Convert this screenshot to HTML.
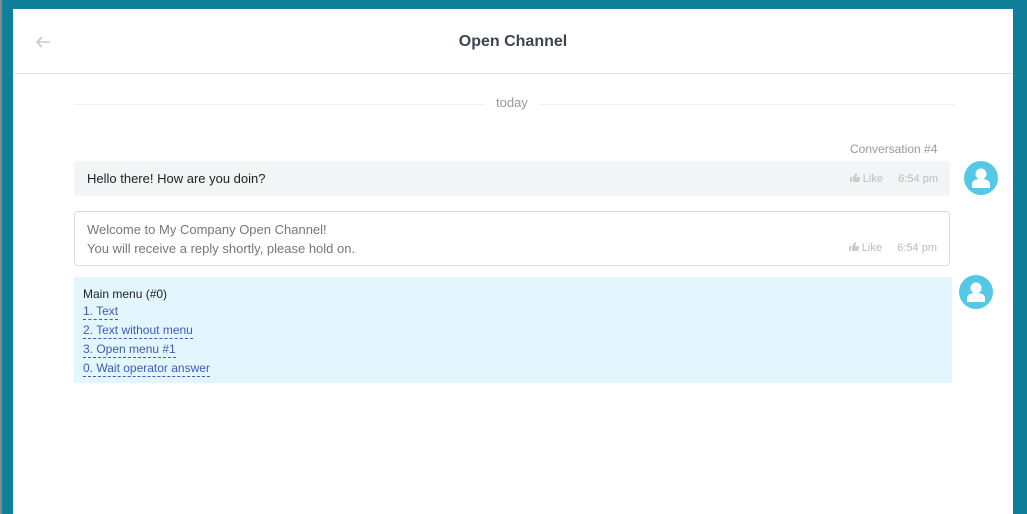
<!DOCTYPE html><html><head><style>
body{margin:0;width:1027px;height:514px;background:#10809a;font-family:"Liberation Sans",sans-serif;position:relative;overflow:hidden}
.l{position:absolute;left:0;top:0;width:2px;height:514px;background:#888}
.w{position:absolute;left:13px;top:9px;width:1000px;height:505px;background:#fff}
.a{position:absolute}
.hdr{left:0;top:0;width:1000px;height:64px;border-bottom:1px solid #e2e3e5}
.t{position:absolute;top:24px;left:0;width:1000px;text-align:center;font-weight:bold;font-size:16px;color:#3d4451}
.b1{left:61px;top:152px;width:876px;height:35px;background:#f3f4f6;border-radius:3px}
.b2{left:61px;top:202px;width:874px;height:53px;border:1px solid #dcdcdc;border-radius:4px}
.m{left:61px;top:268px;width:878px;height:106px;background:#e3f6fd}
.meta{position:absolute;right:12px;font-size:11px;color:#bbb}
.av{position:absolute;width:34px;height:34px;border-radius:50%;background:#55c8e6;overflow:hidden}
.lk{color:#3f5bb5;font-size:12px;display:block;width:fit-content;border-bottom:1px dashed #3f5bb5;line-height:16px;margin-bottom:2px}
</style></head><body><div class="l"></div>
<div class="w">
<div class="a hdr"><svg class="a" style="left:22px;top:26px" width="16" height="14"><path d="M15 7H2M7 2L2 7l5 5" stroke="#c5c8cd" stroke-width="1.6" fill="none"/></svg><div class="t">Open Channel</div></div>
<div class="a" style="left:61px;top:95px;width:881px;height:1px;background:#f0f0f0"></div>
<div class="a" style="left:471px;top:86px;padding:0 12px;background:#fff;color:#999;font-size:13px">today</div>
<div class="a" style="left:837px;top:133px;color:#999;font-size:12px">Conversation #4</div>
<div class="a b1"><div class="a" style="left:13px;top:10px;font-size:13px;color:#222">Hello there! How are you doin?</div><div class="meta" style="top:12px"><svg width="10" height="9"><path d="M0 4h2v5H0zM3 4l3-4c1 0 1 1 1 2L6 4h4v2l-1 3H3z" fill="#ccc"/></svg> Like &nbsp;&nbsp;&nbsp; 6:54 pm</div></div>
<div class="av" style="left:951px;top:152px"><svg width="34" height="34"><circle cx="17" cy="13" r="5.5" fill="#fff"/><path d="M8 27v-4c0-3 3-5 9-5s9 2 9 5v4z" fill="#fff"/></svg></div>
<div class="a b2"><div class="a" style="left:12px;top:8px;font-size:13px;color:#777;line-height:19px">Welcome to My Company Open Channel!<br>You will receive a reply shortly, please hold on.</div><div class="meta" style="top:30px"><svg width="10" height="9"><path d="M0 4h2v5H0zM3 4l3-4c1 0 1 1 1 2L6 4h4v2l-1 3H3z" fill="#ccc"/></svg> Like &nbsp;&nbsp;&nbsp; 6:54 pm</div></div>
<div class="a m"><div class="a" style="left:9px;top:8px;font-size:12px;line-height:18px"><div style="color:#222">Main menu (#0)</div><span class="lk">1. Text</span><span class="lk">2. Text without menu</span><span class="lk">3. Open menu #1</span><span class="lk">0. Wait operator answer</span></div></div>
<div class="av" style="left:946px;top:266px"><svg width="34" height="34"><circle cx="17" cy="13" r="5.5" fill="#fff"/><path d="M8 27v-4c0-3 3-5 9-5s9 2 9 5v4z" fill="#fff"/></svg></div>
</div></body></html>
